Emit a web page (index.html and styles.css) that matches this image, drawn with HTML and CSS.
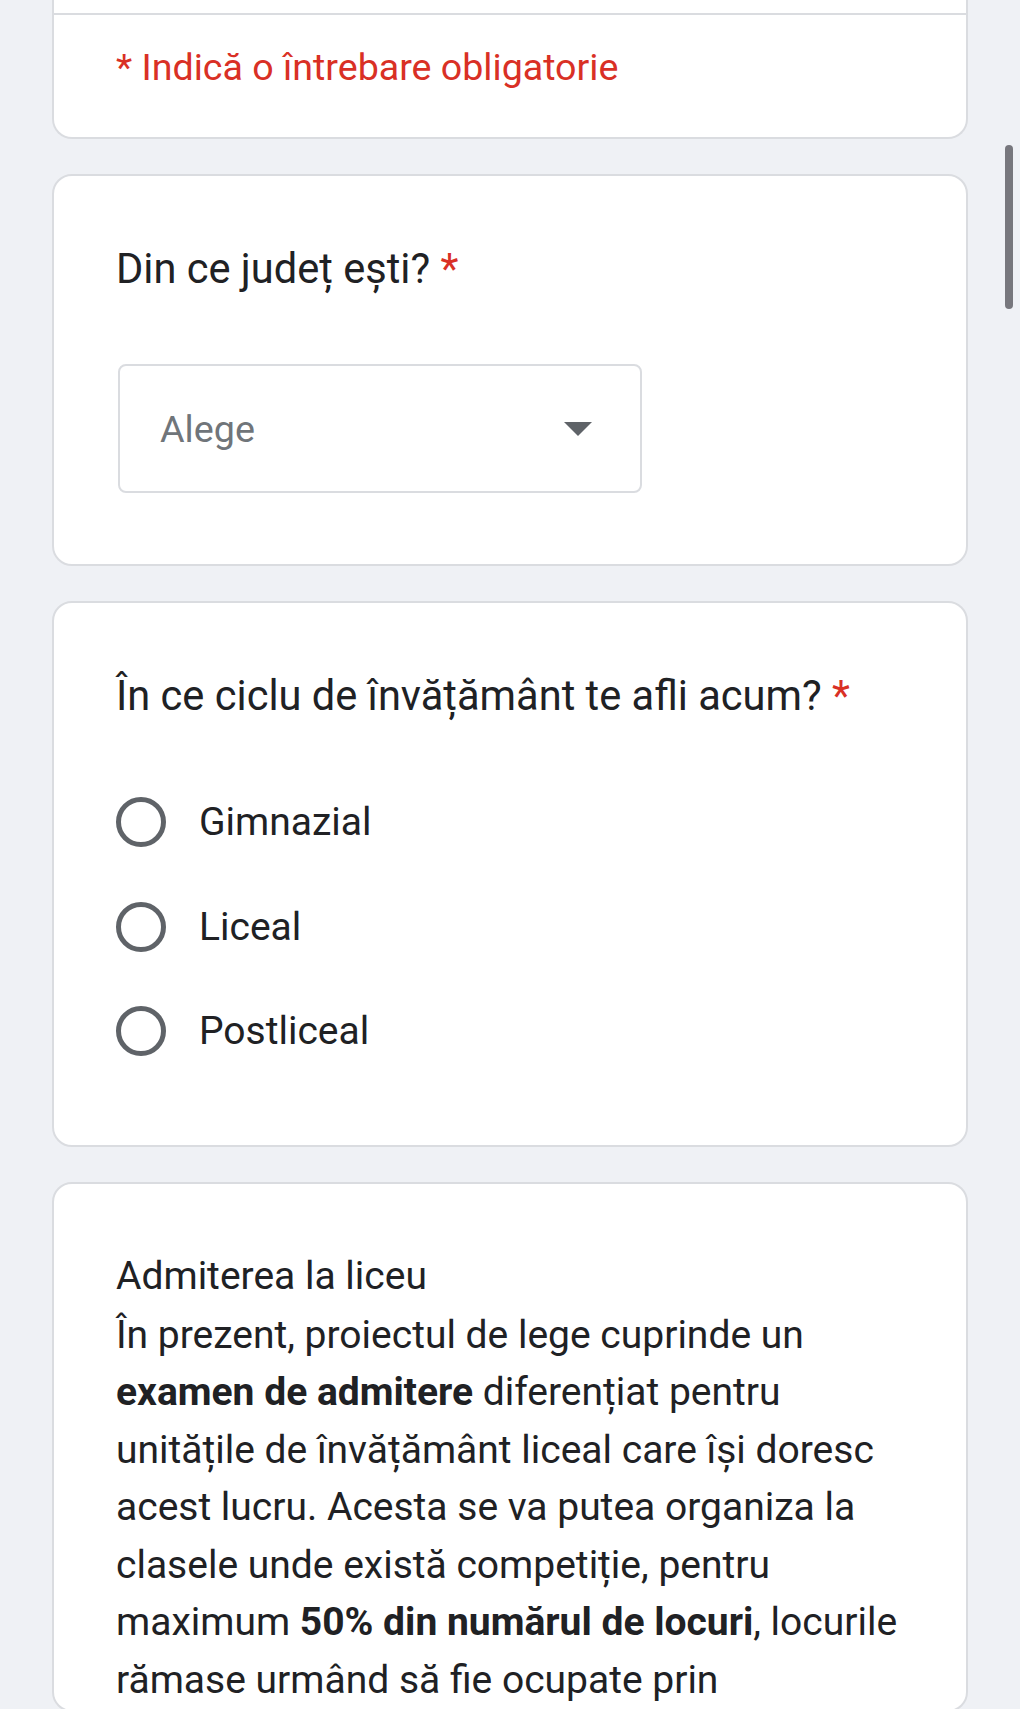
FILE: index.html
```html
<!DOCTYPE html>
<html lang="ro">
<head>
<meta charset="utf-8">
<link rel="stylesheet" href="styles.css">
</head>
<body>
<main class="page">
  <section class="card card-head">
    <div class="head-top"></div>
    <p class="required-note">* Indică o întrebare obligatorie</p>
  </section>

  <section class="card question">
    <h2 class="q-title">Din ce județ ești? <span class="star">*</span></h2>
    <div class="select">
      <span class="select-text">Alege</span>
      <svg class="select-arrow" width="28" height="14" viewBox="0 0 28 14"><path d="M0 0 L28 0 L14 14 Z" fill="#5f6368"/></svg>
    </div>
  </section>

  <section class="card question">
    <h2 class="q-title">În ce ciclu de învățământ te afli acum? <span class="star">*</span></h2>
    <ul class="options">
      <li class="option"><span class="radio"></span><span class="opt-label">Gimnazial</span></li>
      <li class="option"><span class="radio"></span><span class="opt-label">Liceal</span></li>
      <li class="option"><span class="radio"></span><span class="opt-label">Postliceal</span></li>
    </ul>
  </section>

  <section class="card info">
    <h3 class="info-title">Admiterea la liceu</h3>
    <p class="info-text">În prezent, proiectul de lege cuprinde un<br><b>examen de admitere</b> diferențiat pentru<br>unitățile de învățământ liceal care își doresc<br>acest lucru. Acesta se va putea organiza la<br>clasele unde există competiție, pentru<br>maximum <b>50% din numărul de locuri</b>, locurile<br>rămase urmând să fie ocupate prin</p>
  </section>
</main>
<div class="scrollbar"></div>
</body>
</html>
```

FILE: styles.css
```css
html, body {
  margin: 0;
  padding: 0;
}
body {
  background: #eff1f5;
  font-family: Roboto, "Noto Sans", sans-serif;
  color: #202124;
  height: 1709px;
  overflow: hidden;
}
.page {
  width: 916px;
  margin-left: 52px;
  display: flex;
  flex-direction: column;
  gap: 35px;
}
.card {
  background: #fff;
  border: 2px solid #dadce0;
  border-radius: 20px;
  box-sizing: border-box;
}
.card-head {
  border-top: none;
  border-top-left-radius: 0;
  border-top-right-radius: 0;
  height: 139px;
}
.head-top {
  height: 13px;
  border-bottom: 2px solid #dadce0;
  margin: 0 -2px;
}
.required-note {
  margin: 0;
  padding: 30px 0 0 62px;
  font-size: 37.6px;
  line-height: 44px;
  color: #d93025;
}
.question {
  padding: 67px 62px 0 62px;
}
.q-title {
  margin: 0;
  font-weight: 400;
  font-size: 41.6px;
  line-height: 52px;
}
.star {
  color: #d93025;
}
.select {
  margin: 69px 0 71px 2px;
  width: 524px;
  height: 129px;
  border: 2px solid #dadce0;
  border-radius: 8px;
  box-sizing: border-box;
  display: flex;
  align-items: center;
  justify-content: space-between;
  padding: 0 48px 0 40px;
}
.select-text {
  font-size: 37.7px;
  color: #70757a;
}
.options {
  list-style: none;
  margin: 75px 0 0 0;
  padding: 0 0 89px 0;
  display: flex;
  flex-direction: column;
  gap: 54.5px;
}
.option {
  display: flex;
  align-items: center;
  gap: 33px;
  height: 50px;
}
.radio {
  width: 50px;
  height: 50px;
  border: 5px solid #5f6368;
  border-radius: 50%;
  box-sizing: border-box;
  flex: none;
}
.opt-label {
  font-size: 39px;
}
.info {
  padding: 63px 62px 0 62px;
}
.info-title {
  margin: 0;
  font-weight: 400;
  font-size: 39px;
  line-height: 59.5px;
}
.info-text {
  margin: 0;
  font-size: 39px;
  line-height: 57.6px;
  white-space: nowrap;
}
.info-text b {
  font-weight: 700;
}
.scrollbar {
  position: fixed;
  left: 1005px;
  top: 145px;
  width: 8px;
  height: 164px;
  border-radius: 4px;
  background: #77777d;
}
```
